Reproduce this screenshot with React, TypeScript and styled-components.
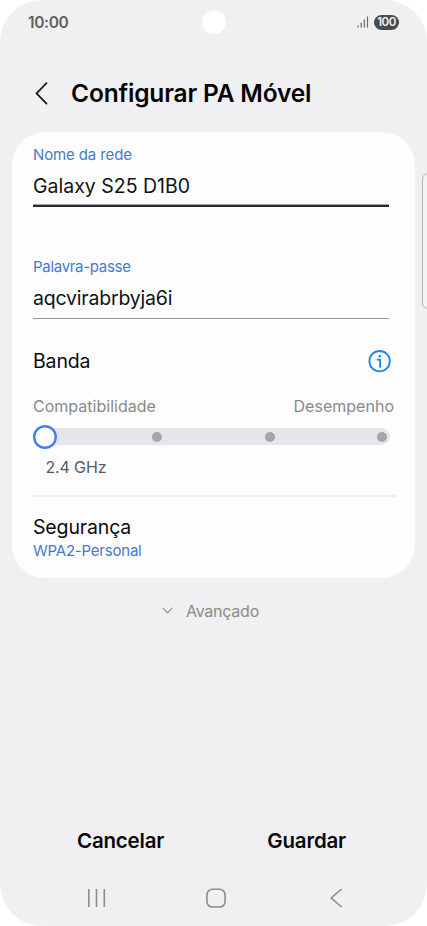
import React, { FC } from 'react';
import styled, { createGlobalStyle, css } from 'styled-components';

const GlobalStyle = createGlobalStyle`
    * {
        box-sizing: border-box;
    }

    body {
        margin: 0;
        background: #ffffff;
        font-family: Inter, Roboto, sans-serif;
        -webkit-font-smoothing: antialiased;
    }

    button {
        padding: 0;
        border: none;
        background: none;
        font-family: inherit;
    }

    svg {
        display: block;
        flex-shrink: 0;
    }
`;

const Screen = styled.div`
    position: relative;
    display: flex;
    flex-direction: column;
    width: 427px;
    height: 926px;
    border-radius: 42px;
    overflow: hidden;
    background: #f0f0f2;
`;

const StatusBar = styled.div`
    display: grid;
    grid-template-columns: 1fr 24px 1fr;
    align-items: center;
    height: 44px;
    padding: 0 28px;
`;

const Time = styled.span`
    font-size: 15.5px;
    font-weight: 600;
    letter-spacing: -0.35px;
    color: #5f5f61;
`;

const Camera = styled.div`
    width: 24px;
    height: 24px;
    border-radius: 50%;
    background: #ffffff;
`;

const StatusIcons = styled.div`
    display: flex;
    align-items: center;
    justify-content: flex-end;
    gap: 5px;
`;

const Battery = styled.span`
    width: 25px;
    height: 15px;
    border-radius: 8px;
    background: #4b4b4b;
    color: #f5f5f5;
    font-size: 11.5px;
    font-weight: 600;
    line-height: 15px;
    letter-spacing: -0.5px;
    text-align: center;
`;

const Header = styled.header`
    display: flex;
    align-items: center;
    gap: 23px;
    height: 88px;
    padding: 10px 0 0 35px;
`;

const Title = styled.h1`
    margin: 0;
    font-size: 24.5px;
    font-weight: 600;
    letter-spacing: -0.17px;
    color: #050506;
    white-space: nowrap;
`;

const Card = styled.main`
    height: 446px;
    margin: 0 12px;
    padding: 13px 26px 0 21px;
    border-radius: 33px;
    background: #fdfdfe;
`;

const Field = styled.label<{ active?: boolean }>`
    display: flex;
    flex-direction: column;
    height: 62px;
    border-bottom: ${props => (props.active ? '2px solid #29292b' : '1px solid #949496')};

    ${props =>
        props.active &&
        css`
            margin-bottom: 50px;
            box-shadow: inset 0 -1px #a5a5a7;
        `}
`;

const FieldLabel = styled.span<{ spacing: number }>`
    height: 26px;
    font-size: 15px;
    line-height: 20px;
    letter-spacing: ${props => props.spacing}px;
    color: #4878d0;
`;

const FieldValue = styled.span<{ spacing: number }>`
    font-size: 19.5px;
    line-height: 30px;
    letter-spacing: ${props => props.spacing}px;
    color: #111113;
`;

const SettingRow = styled.div`
    display: flex;
    align-items: center;
    justify-content: space-between;
    height: 30px;
    margin: 27px -2px 0 0;
`;

const SettingName = styled.div`
    font-size: 19.5px;
    line-height: 30px;
    letter-spacing: -0.15px;
    color: #0c0c0e;
`;

const RangeLabels = styled.div`
    display: flex;
    justify-content: space-between;
    margin: 20px -5px 0 0;
    font-size: 16px;
    line-height: 20px;
    letter-spacing: 0.02px;
    color: #8a8a8c;
`;

const Track = styled.div`
    display: flex;
    align-items: center;
    justify-content: space-between;
    height: 17px;
    margin: 12px -1px 0 0;
    padding-right: 3px;
    border-radius: 9px;
    background: #e6e6ea;
`;

const Thumb = styled.div`
    width: 24px;
    height: 24px;
    border-radius: 50%;
    background: #fdfdfe;
    box-shadow: inset 0 0 0 2.4px #4580ea;
`;

const Stop = styled.div`
    width: 10px;
    height: 10px;
    border-radius: 50%;
    background: #a5a5a7;

    ${Thumb} + & {
        margin-left: -7px;
    }
`;

const BandValue = styled.div`
    margin: 12px 0 0 12.5px;
    font-size: 16px;
    line-height: 20px;
    letter-spacing: -0.15px;
    color: #58585a;
`;

const Divider = styled.hr`
    height: 2px;
    margin: 18px -7px 0 -2px;
    border: none;
    background: #eeeef0;
`;

const Security = styled.div`
    padding-top: 15px;
`;

const SecurityType = styled.div`
    font-size: 15px;
    line-height: 18px;
    letter-spacing: -0.22px;
    color: #4878d0;
`;

const Advanced = styled.button`
    display: flex;
    align-items: center;
    gap: 13px;
    height: 24px;
    margin: 21px 0 0 162px;
    font-size: 16px;
    letter-spacing: -0.25px;
    color: #8a8a8c;
`;

const Actions = styled.footer`
    display: flex;
    justify-content: space-between;
    margin-top: auto;
    padding: 0 81px 0 77px;
`;

const Action = styled.button`
    height: 30px;
    font-size: 20.5px;
    font-weight: 600;
    letter-spacing: -0.2px;
    color: #08080a;
`;

const NavBar = styled.nav`
    display: flex;
    align-items: center;
    height: 56px;
    margin-top: 15px;
    padding-left: 87px;
`;

// Side handle of the edge panel, it runs off the right side of the screen
const EdgeHandle = styled.div`
    position: absolute;
    top: 173px;
    right: -7px;
    width: 12px;
    height: 136px;
    border: 1px solid #b4b4b6;
    border-radius: 6px;
    background: #f3f3f5;
`;

const SignalIcon: FC = () => (
    <svg width="12" height="12" viewBox="0 0 12 12" stroke="#6a6a6c" strokeWidth="1.2">
        <path d="M1 9.3V11.5M4.2 6.6V11.5M7.3 3.6V11.5M10.5 0.5V11.5" />
    </svg>
);

const BackIcon: FC = () => (
    <svg width="13" height="23" viewBox="0 0 13 23" fill="none" stroke="#151517" strokeWidth="1.7">
        <path d="M11.5 1.2L1.5 11.3L11.5 21.6" strokeLinecap="round" strokeLinejoin="round" />
    </svg>
);

const InfoIcon: FC = () => (
    <svg width="23" height="23" viewBox="0 0 23 23" fill="none" stroke="#1d86e6" strokeWidth="1.8">
        <circle cx="11.6" cy="11.2" r="10.2" />
        <circle cx="11.8" cy="6.2" r="1.25" fill="#1d86e6" stroke="none" />
        <path d="M9.6 9.7H12.1V17" strokeLinecap="round" strokeLinejoin="round" />
    </svg>
);

const ChevronIcon: FC = () => (
    <svg width="11" height="8" viewBox="0 0 11 8" fill="none" stroke="#949496" strokeWidth="1.2">
        <path d="M1 1.2L5.5 5.8L10 1.2" strokeLinecap="round" />
    </svg>
);

const RecentsIcon: FC = () => (
    <svg width="19" height="20" viewBox="0 0 19 20" stroke="#8c8c8e" strokeWidth="1.6">
        <path d="M1.8 1V19M9.5 1V19M17.3 1V19" />
    </svg>
);

const HomeIcon: FC = () => (
    <svg width="20" height="20" viewBox="0 0 20 20" fill="none" stroke="#8c8c8e" strokeWidth="1.6">
        <rect x="0.9" y="1.2" width="18.2" height="17.8" rx="5.5" />
    </svg>
);

const NavBackIcon: FC = () => (
    <svg width="13" height="20" viewBox="0 0 13 20" fill="none" stroke="#8c8c8e" strokeWidth="1.6">
        <path d="M11.6 1L1.2 10L11.6 19" />
    </svg>
);

const NavKeys = styled.div`
    display: flex;
    align-items: center;
    justify-content: space-between;
    width: 256px;

    svg:nth-child(2) {
        margin-right: 4px;
    }
`;

const App: FC = () => {
    return (
        <>
            <GlobalStyle />
            <Screen>
                <StatusBar>
                    <Time>10:00</Time>
                    <Camera />
                    <StatusIcons>
                        <SignalIcon />
                        <Battery>100</Battery>
                    </StatusIcons>
                </StatusBar>
                <Header>
                    <BackIcon />
                    <Title>Configurar PA Móvel</Title>
                </Header>
                <Card>
                    <Field active>
                        <FieldLabel spacing={-0.12}>Nome da rede</FieldLabel>
                        <FieldValue spacing={0}>Galaxy S25 D1B0</FieldValue>
                    </Field>
                    <Field>
                        <FieldLabel spacing={-0.3}>Palavra-passe</FieldLabel>
                        <FieldValue spacing={-0.2}>aqcvirabrbyja6i</FieldValue>
                    </Field>
                    <SettingRow>
                        <SettingName>Banda</SettingName>
                        <InfoIcon />
                    </SettingRow>
                    <RangeLabels>
                        <span>Compatibilidade</span>
                        <span>Desempenho</span>
                    </RangeLabels>
                    <Track>
                        <Thumb />
                        <Stop />
                        <Stop />
                        <Stop />
                    </Track>
                    <BandValue>2.4 GHz</BandValue>
                    <Divider />
                    <Security>
                        <SettingName>Segurança</SettingName>
                        <SecurityType>WPA2-Personal</SecurityType>
                    </Security>
                </Card>
                <Advanced>
                    <ChevronIcon />
                    Avançado
                </Advanced>
                <Actions>
                    <Action>Cancelar</Action>
                    <Action>Guardar</Action>
                </Actions>
                <NavBar>
                    <NavKeys>
                        <RecentsIcon />
                        <HomeIcon />
                        <NavBackIcon />
                    </NavKeys>
                </NavBar>
                <EdgeHandle />
            </Screen>
        </>
    );
};

export default App;
